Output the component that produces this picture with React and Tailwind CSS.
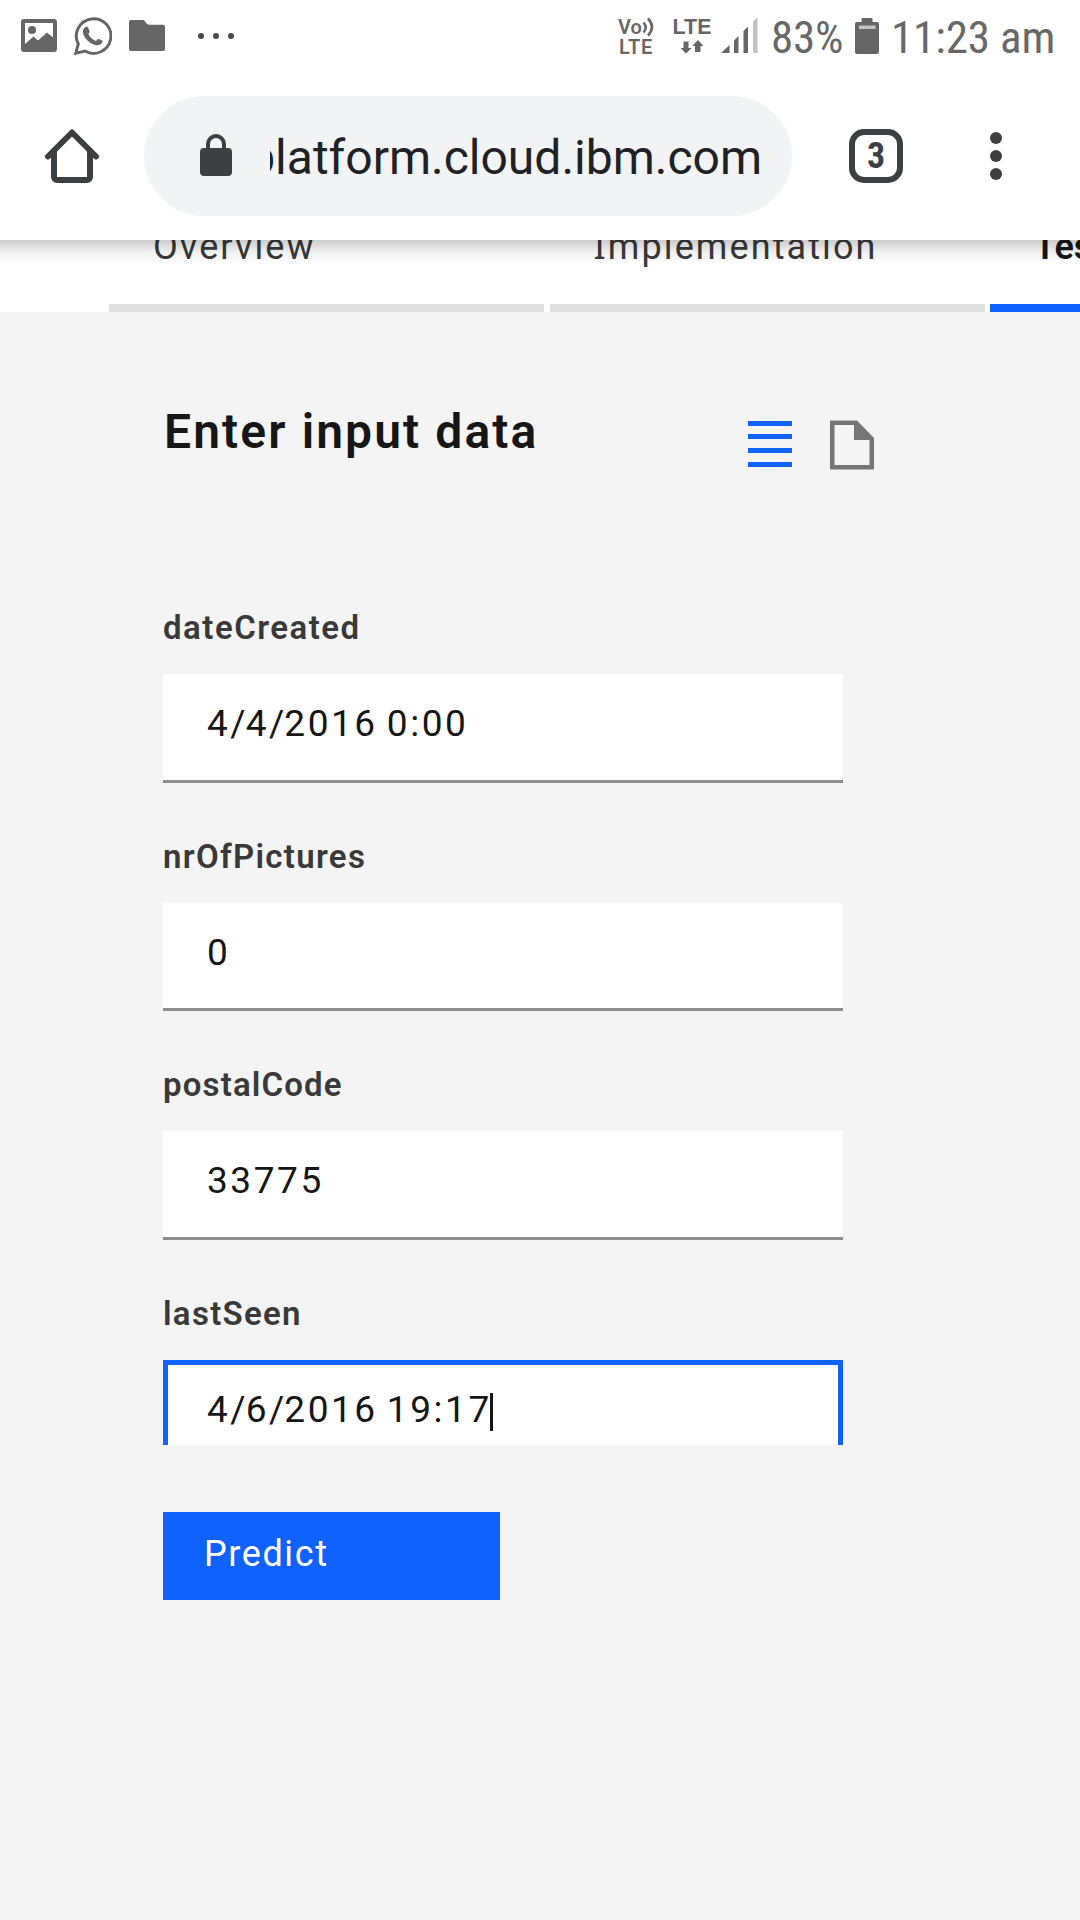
const fields = [
  { label: "dateCreated", value: "4/4/2016 0:00", labelTracking: "tracking-[1.5px]" },
  { label: "nrOfPictures", value: "0", labelTracking: "tracking-[1.3px]" },
  { label: "postalCode", value: "33775", labelTracking: "tracking-[1.15px]" },
  { label: "lastSeen", value: "4/6/2016 19:17", labelTracking: "tracking-[1.3px]", focused: true },
];

function PictureIcon() {
  return (
    <svg className="ml-[21px] mt-[19px] h-[34px] w-[36px] shrink-0" viewBox="0 0 36 34" fill="#666">
      <path
        fillRule="evenodd"
        d="M3 0h30a3 3 0 0 1 3 3v27a3 3 0 0 1-3 3H3a3 3 0 0 1-3-3V3a3 3 0 0 1 3-3ZM4 4v21l8.500-7.500 4.500 4L26 13.500l6 5V4Z"
      />
      <circle cx="11" cy="11" r="4" />
    </svg>
  );
}

function WhatsAppIcon() {
  return (
    <svg className="ml-[16px] mt-[17px] h-[39px] w-[39px] shrink-0" viewBox="0 0 39 39">
      <path
        d="M5.300 27A17.300 17.300 0 1 1 12 34L2.800 36.200Z"
        fill="none"
        stroke="#666"
        strokeWidth="3"
        strokeLinejoin="miter"
      />
      <path
        d="M12.300 10.300c1.300-.8 2.500-.5 3 .6l1.200 3c.4 1-.1 1.800-1.200 3.200 1.800 3.400 4.300 5.600 7.600 7 1.200-1.500 2-2.500 3-2.100l3.200 1.600c.7.4.6 1.400-.1 2.500-1.500 2.400-5 2.700-8.500 1.300-4.600-1.800-8.200-5.300-10.100-10-1-2.800-.5-5.700 1.900-7.100Z"
        fill="#666"
      />
    </svg>
  );
}

function FolderIcon() {
  return (
    <svg className="ml-[17px] mt-[20px] h-[31px] w-[36px] shrink-0" viewBox="0 0 36 31" fill="#666">
      <path d="M2 0h11.500c1 0 1.600.3 2.200 1l2 2.600c.6.8 1.200 1.100 2.200 1.100H34a2 2 0 0 1 2 2V29a2 2 0 0 1-2 2H2a2 2 0 0 1-2-2V2a2 2 0 0 1 2-2Z" />
    </svg>
  );
}

function MoreNotifications() {
  return (
    <div className="ml-[33px] mt-[33px] flex gap-[9px]">
      <i className="size-[6px] rounded-full bg-[#484848]" />
      <i className="size-[6px] rounded-full bg-[#484848]" />
      <i className="size-[6px] rounded-full bg-[#484848]" />
    </div>
  );
}

function VolteIcon() {
  return (
    <div className="mt-[17px] flex w-[38px] shrink-0 flex-col text-[20px] leading-[20px] font-semibold text-[#686868]">
      <div className="flex h-[20px]">
        <span>Vo</span>
        <svg className="h-[20px] w-[13px] shrink-0" viewBox="0 0 13 20" fill="none" stroke="#686868" strokeWidth="2.600">
          <path d="M1.500 5.500q4.500 5 0 10M6 1.500q8 8.500 0 17" />
        </svg>
      </div>
      <span className="pl-px tracking-[0.6px]">LTE</span>
    </div>
  );
}

function LteDataIcon() {
  return (
    <div className="ml-[16px] mt-[16px] flex w-[40px] shrink-0 flex-col items-center text-[#666]">
      <span className="font-['Liberation_Sans',sans-serif] text-[21.500px] leading-[23px] font-bold">LTE</span>
      <svg className="mt-px h-[14px] w-[22px]" viewBox="0 0 22 14" fill="#666">
        <path d="M2.500 1.500h5v6.500H10.500L5 13.500 -.5 8H2.500ZM14 12h5.500V6H22.500L17 0l-5.800 6H14Z" />
      </svg>
    </div>
  );
}

function SignalIcon() {
  return (
    <svg className="ml-[9px] mt-[17px] h-[36px] w-[37px] shrink-0" viewBox="0 0 37 36">
      <path d="M0 36 8.500 28V36ZM13 36V23.500L17.500 19V36ZM22.500 36V14L27 9.500V36Z" fill="#666" />
      <path d="M32 36V4.500L36.500 0V36Z" fill="#c2c2c2" />
    </svg>
  );
}

function BatteryIcon() {
  return (
    <svg className="ml-[13px] mt-[18px] h-[36px] w-[24px] shrink-0" viewBox="0 0 24 36">
      <path d="M7.500 0h9a1 1 0 0 1 1 1v3H22a2 2 0 0 1 2 2v28a2 2 0 0 1-2 2H2a2 2 0 0 1-2-2V6a2 2 0 0 1 2-2h4.500V1a1 1 0 0 1 1-1Z" fill="#666" />
      <path d="M4 7.500h16.500v3.500H4Z" fill="#c2c2c2" />
    </svg>
  );
}

function StatusBar() {
  return (
    <div className="flex h-[72px] items-start">
      <PictureIcon />
      <WhatsAppIcon />
      <FolderIcon />
      <MoreNotifications />
      <div className="ml-auto flex w-[462px] items-start whitespace-nowrap text-[#686868]">
        <VolteIcon />
        <LteDataIcon />
        <SignalIcon />
        <span className="ml-[13px] w-[71px] text-[45px] leading-[76px] tracking-[-0.2px] [font-stretch:75%]">83%</span>
        <BatteryIcon />
        <span className="ml-[12px] text-[45px] leading-[76px] tracking-[-0.1px] [font-stretch:75%]">11:23 am</span>
      </div>
    </div>
  );
}

function BrowserToolbar() {
  return (
    <div className="flex h-[168px] items-start pt-[24px]">
      <svg className="ml-[44px] mt-[32px] h-[56px] w-[56px] shrink-0" viewBox="0 0 56 56" fill="none" stroke="#3c4043" strokeWidth="6" strokeLinecap="round">
        <path d="M4 28.500 28 4.500 52 28.500" strokeLinejoin="round" />
        <path d="M10 25V49a3 3 0 0 0 3 3H43a3 3 0 0 0 3-3V25" />
      </svg>
      <div className="ml-[44px] flex h-[120px] w-[648px] items-start rounded-full bg-[#f1f3f4]">
        <svg className="ml-[56px] mt-[38px] h-[43px] w-[32px] shrink-0" viewBox="0 0 32 43">
          <path d="M8 16V10a8 8 0 0 1 16 0V16" fill="none" stroke="#3c4043" strokeWidth="4" />
          <rect y="14" width="32" height="28" rx="4" fill="#3c4043" />
        </svg>
        <div className="ml-[38px] flex w-[492px] justify-end overflow-hidden">
          <span className="shrink-0 text-[48px] leading-[123px] text-[#202124]">platform.cloud.ibm.com</span>
        </div>
      </div>
      <div className="ml-[57px] mt-[33px] flex size-[54px] shrink-0 items-center justify-center rounded-[15px] border-[6px] border-[#3c4043] text-[36px] leading-none font-bold text-[#3c4043] [font-stretch:75%]">
        3
      </div>
      <div className="ml-[87px] mt-[36px] flex flex-col gap-[6px]">
        <i className="size-[12px] rounded-full bg-[#3c4043]" />
        <i className="size-[12px] rounded-full bg-[#3c4043]" />
        <i className="size-[12px] rounded-full bg-[#3c4043]" />
      </div>
    </div>
  );
}

function Tabs() {
  return (
    <nav className="relative flex h-[72px] gap-[5.500px] overflow-hidden bg-white pl-[109px] text-[36px] leading-[54px] text-[#393939]">
      <div className="flex w-[435px] shrink-0 flex-col border-b-[8px] border-[#e0e0e0] pl-[44px]">
        <span className="-mt-[20px] tracking-[2.1px]">Overview</span>
      </div>
      <div className="flex w-[435px] shrink-0 flex-col border-b-[8px] border-[#e0e0e0] pl-[44px]">
        <span className="-mt-[20px] tracking-[2.1px]">
          <span className="font-['Noto_Sans',sans-serif] leading-none">I</span>mplementation
        </span>
      </div>
      <div className="flex w-[435px] shrink-0 flex-col border-b-[8px] border-[#0f62fe] pl-[44px]">
        <span className="-mt-[20px] font-semibold text-[#161616]">Test</span>
      </div>
      <div className="absolute inset-x-0 top-0 h-[24px] bg-linear-to-b from-black/20 via-black/6 to-transparent" />
    </nav>
  );
}

/* Digits are set wider than the slashes and spaces between them. */
function FieldValue({ value }) {
  return (
    <span className="tracking-[2.55px] whitespace-pre">
      {value.split(/([/ ])/).map((part, i) => (
        <span key={i} className={i % 2 ? "tracking-normal" : ""}>
          {part}
        </span>
      ))}
    </span>
  );
}

function Field({ label, value, labelTracking, focused }) {
  return (
    <div className="h-[228.500px]">
      <div className={`mb-[26px] text-[33px] leading-[40px] font-semibold text-[#393939] ${labelTracking}`}>{label}</div>
      <div
        className={`flex h-[108.500px] w-[680px] items-start bg-white text-[37px] text-[#161616] ${
          focused ? "border-[5px] border-[#0f62fe] pl-[39px] leading-[90px]" : "border-b-[3px] border-[#8d8d8d] pl-[44px] leading-[99px]"
        }`}
      >
        <FieldValue value={value} />
        {focused && <i className="-ml-[2px] mt-[28px] h-[38px] w-[3px] bg-[#161616]" />}
      </div>
    </div>
  );
}

export default function App() {
  return (
    <div className="flex h-[1920px] w-[1080px] flex-col overflow-hidden bg-[#f4f4f4] font-['Roboto',sans-serif]">
      <header className="h-[240px] shrink-0 bg-white">
        <StatusBar />
        <BrowserToolbar />
      </header>
      <Tabs />
      <main className="flex flex-col items-start pt-[88px] pl-[163px]">
        <div className="flex h-[64px] w-[711px] items-start justify-between">
          <h1 className="pl-px text-[48px] leading-[64px] font-semibold tracking-[2.1px] text-[#161616]">Enter input data</h1>
          <div className="mt-[20px] flex gap-[38px]">
            <div className="flex w-[44px] flex-col gap-[8.700px] pt-[0.500px]">
              <i className="h-[5px] bg-[#0f62fe]" />
              <i className="h-[5px] bg-[#0f62fe]" />
              <i className="h-[5px] bg-[#0f62fe]" />
              <i className="h-[5px] bg-[#0f62fe]" />
            </div>
            <svg className="h-[50px] w-[44px]" viewBox="0 0 44 50" fill="#767676">
              <path fillRule="evenodd" d="M0 .5H27L44 18V49.500H0ZM4.500 5V45H39.500V20H24V5Z" />
            </svg>
          </div>
        </div>
        <div className="mt-[144px] h-[837px] overflow-hidden">
          {fields.map((field) => (
            <Field key={field.label} {...field} />
          ))}
        </div>
        <button className="mt-[67px] h-[88px] w-[337px] bg-[#0f62fe] pb-[4px] pl-[41px] text-left text-[36px] leading-[84px] tracking-[1.6px] text-white">
          Predict
        </button>
      </main>
    </div>
  );
}
